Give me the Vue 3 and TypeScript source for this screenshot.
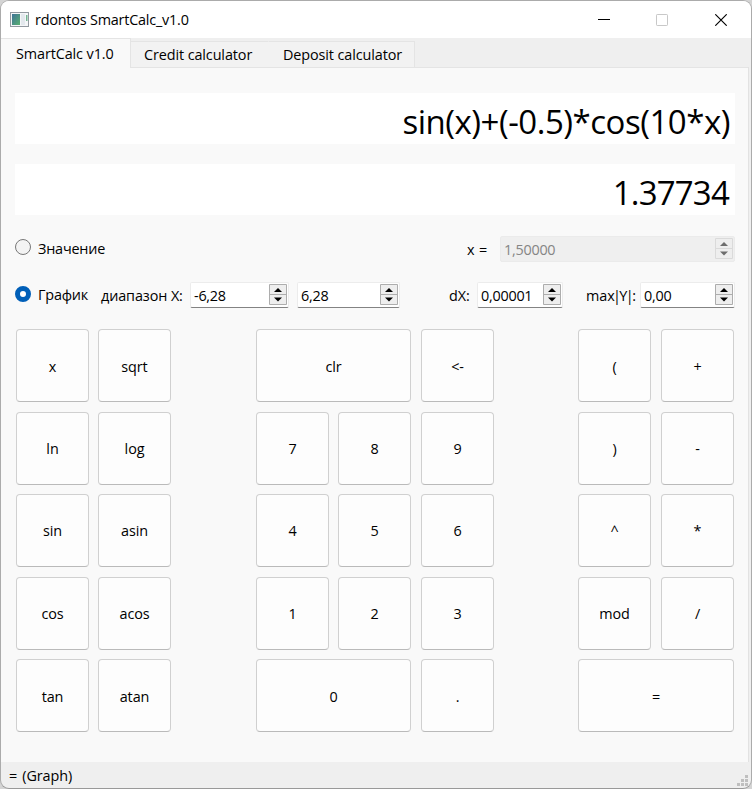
<script setup lang="ts">
import { ref } from 'vue'

interface Key {
  label: string
  row: number
  col: number
  span?: number
}

const tabs = ['SmartCalc v1.0', 'Credit calculator', 'Deposit calculator']
const mode = ref<'value' | 'graph'>('graph')
const expression = ref('sin(x)+(-0.5)*cos(10*x)')
const result = ref('1.37734')

// Grid lines: odd tracks hold keys, even tracks are the gutters between them.
const keys: Key[] = [
  { label: 'x', row: 1, col: 1 }, { label: 'sqrt', row: 1, col: 3 },
  { label: 'clr', row: 1, col: 5, span: 3 }, { label: '<-', row: 1, col: 9 },
  { label: '(', row: 1, col: 11 }, { label: '+', row: 1, col: 13 },
  { label: 'ln', row: 3, col: 1 }, { label: 'log', row: 3, col: 3 },
  { label: '7', row: 3, col: 5 }, { label: '8', row: 3, col: 7 }, { label: '9', row: 3, col: 9 },
  { label: ')', row: 3, col: 11 }, { label: '-', row: 3, col: 13 },
  { label: 'sin', row: 5, col: 1 }, { label: 'asin', row: 5, col: 3 },
  { label: '4', row: 5, col: 5 }, { label: '5', row: 5, col: 7 }, { label: '6', row: 5, col: 9 },
  { label: '^', row: 5, col: 11 }, { label: '*', row: 5, col: 13 },
  { label: 'cos', row: 7, col: 1 }, { label: 'acos', row: 7, col: 3 },
  { label: '1', row: 7, col: 5 }, { label: '2', row: 7, col: 7 }, { label: '3', row: 7, col: 9 },
  { label: 'mod', row: 7, col: 11 }, { label: '/', row: 7, col: 13 },
  { label: 'tan', row: 9, col: 1 }, { label: 'atan', row: 9, col: 3 },
  { label: '0', row: 9, col: 5, span: 3 }, { label: '.', row: 9, col: 9 },
  { label: '=', row: 9, col: 11, span: 3 },
]

const place = (k: Key) => ({ gridRow: `${k.row}`, gridColumn: `${k.col} / span ${k.span ?? 1}` })

function press(label: string) {
  if (label === 'clr') expression.value = ''
  else if (label === '<-') expression.value = expression.value.slice(0, -1)
  else if (label !== '=') expression.value += label
}
</script>

<template>
  <div class="desktop">
    <div class="window">
      <header class="titlebar">
        <svg class="app-icon" width="19" height="15" viewBox="0 0 19 15">
          <defs>
            <linearGradient id="screen" x1="0" y1="0" x2="1" y2="1">
              <stop offset="0" stop-color="#3f7398" />
              <stop offset="1" stop-color="#58b070" />
            </linearGradient>
          </defs>
          <rect x="0.5" y="0.5" width="18" height="14" fill="#f4f6f8" stroke="#9299a0" />
          <rect x="2" y="2" width="8" height="11" fill="url(#screen)" />
          <rect x="11" y="2" width="4" height="11" fill="#e3e8ed" />
          <rect x="16" y="3" width="1.5" height="6" fill="#74b592" />
        </svg>
        <span class="title">rdontos SmartCalc_v1.0</span>
        <div class="controls">
          <svg width="12" height="12" viewBox="0 0 12 12"><path d="M0 5.5H12" stroke="#000" /></svg>
          <svg width="12" height="12" viewBox="0 0 12 12"><rect x="0.5" y="0.5" width="11" height="11" rx="0.7" fill="none" stroke="#c8c8c8" /></svg>
          <svg class="close" width="12" height="12" viewBox="0 0 12 12"><path d="M0.3 0.3L11.7 11.7M11.7 0.3L0.3 11.7" stroke="#000" stroke-width="1.15" /></svg>
        </div>
      </header>

      <nav class="tabs">
        <div v-for="(t, i) in tabs" :key="t" class="tab" :class="['tab-' + i, { active: i === 0 }]">{{ t }}</div>
      </nav>

      <main class="pane">
        <div class="display">{{ expression }}</div>
        <div class="display second">{{ result }}</div>

        <div class="row value-row">
          <span class="radio" :class="{ on: mode === 'value' }" @click="mode = 'value'"></span>
          <span class="caption">Значение</span>
          <span class="x-label">x =</span>
          <div class="spin disabled x-spin">
            <span class="num">1,50000</span>
            <svg class="arrows" width="18" height="21" viewBox="0 0 18 21"><path d="M0.5 0.5H17.5V20.5H0.5ZM0.5 10.5H17.5" /><path class="tri" d="M5 8L9 4L13 8ZM5 13.5H13L9 17.5Z" /></svg>
          </div>
        </div>

        <div class="row graph-row">
          <span class="radio" :class="{ on: mode === 'graph' }" @click="mode = 'graph'"></span>
          <span class="caption graph">График</span>
          <span class="range-label">диапазон X:</span>
          <div class="spin from-spin">
            <span class="num">-6,28</span>
            <svg class="arrows" width="18" height="21" viewBox="0 0 18 21"><path d="M0.5 0.5H17.5V20.5H0.5ZM0.5 10.5H17.5" /><path class="tri" d="M5 8L9 4L13 8ZM5 13.5H13L9 17.5Z" /></svg>
          </div>
          <div class="spin to-spin">
            <span class="num">6,28</span>
            <svg class="arrows" width="18" height="21" viewBox="0 0 18 21"><path d="M0.5 0.5H17.5V20.5H0.5ZM0.5 10.5H17.5" /><path class="tri" d="M5 8L9 4L13 8ZM5 13.5H13L9 17.5Z" /></svg>
          </div>
          <span class="dx-label">dX:</span>
          <div class="spin dx-spin">
            <span class="num">0,00001</span>
            <svg class="arrows" width="18" height="21" viewBox="0 0 18 21"><path d="M0.5 0.5H17.5V20.5H0.5ZM0.5 10.5H17.5" /><path class="tri" d="M5 8L9 4L13 8ZM5 13.5H13L9 17.5Z" /></svg>
          </div>
          <span class="max-label">ma<span class="abs">x|Y|</span>:</span>
          <div class="spin max-spin">
            <span class="num">0,00</span>
            <svg class="arrows" width="18" height="21" viewBox="0 0 18 21"><path d="M0.5 0.5H17.5V20.5H0.5ZM0.5 10.5H17.5" /><path class="tri" d="M5 8L9 4L13 8ZM5 13.5H13L9 17.5Z" /></svg>
          </div>
        </div>

        <div class="keypad">
          <button v-for="k in keys" :key="k.label" class="key" :class="{ inner: k.row > 1 && k.row < 9 }" :style="place(k)" @click="press(k.label)">{{ k.label }}</button>
        </div>
      </main>

      <footer class="status">
        <span class="message">= (Graph)</span>
        <svg class="grip" width="11" height="11" viewBox="0 0 11 11">
          <path fill="#bfbfbf" d="M8 0h3v3h-3zM4 4h3v3h-3zM8 4h3v3h-3zM0 8h3v3h-3zM4 8h3v3h-3zM8 8h3v3h-3z" />
        </svg>
      </footer>
    </div>
  </div>
</template>

<style>
body {
  margin: 0;
  background: #fff;
}
</style>

<style scoped>
.desktop {
  width: 752px;
  height: 789px;
  background: #d4d4d4;
  font-family: 'Open Sans', 'Noto Sans', sans-serif;
  font-size: 14.4px;
  letter-spacing: -0.1px;
  color: #000;
}
.window {
  box-sizing: border-box;
  width: 752px;
  height: 789px;
  border: 1px solid #ababab;
  border-bottom-color: #999;
  border-radius: 9px;
  overflow: hidden;
  background: #efefef;
  display: flex;
  flex-direction: column;
}
.titlebar {
  height: 37px;
  flex: none;
  background: #fff;
  display: flex;
  align-items: center;
  padding: 0 24px 0 9px;
}
.title {
  margin-left: 6px;
  letter-spacing: -0.2px;
}
.controls {
  margin-left: auto;
  display: flex;
  gap: 46px;
}
.controls svg {
  display: block;
}
.controls .close {
  margin-left: 1px;
}
.tabs {
  height: 30px;
  flex: none;
  display: flex;
  align-items: flex-end;
}
.tab {
  box-sizing: border-box;
  height: 27px;
  line-height: 25px;
  background: #f2f2f2;
  border: 1px solid #e4e4e4;
  border-left: 0;
  white-space: nowrap;
}
.tab-1 {
  width: 138px;
  padding-left: 13px;
  border-right-color: #f2f2f2;
}
.tab-2 {
  width: 146px;
  padding-left: 14px;
}
.tab.active {
  width: 130px;
  height: 30px;
  line-height: 30px;
  padding-left: 15px;
  background: #f9f9f9;
  border-bottom: 0;
}
.pane {
  box-sizing: border-box;
  width: 748px;
  height: 695px;
  flex: none;
  margin-top: -1px;
  padding: 26px 13px 0 14px;
  border-right: 1px solid #e2e2e2;
  background: linear-gradient(#e4e4e4, #e4e4e4) 129px 0 / 618px 1px no-repeat #f9f9f9;
}
.display {
  height: 51px;
  line-height: 57px;
  background: #fff;
  text-align: right;
  padding-right: 5px;
  font-size: 33px;
  letter-spacing: -0.48px;
}
.second {
  margin-top: 20px;
  padding-right: 6px;
  letter-spacing: -0.8px;
}
.row {
  display: flex;
  height: 26px;
  line-height: 26px;
  white-space: nowrap;
}
.value-row {
  margin-top: 21px;
}
.graph-row {
  margin-top: 20px;
}
.radio {
  box-sizing: border-box;
  flex: none;
  width: 16px;
  height: 16px;
  margin-top: 3px;
  border: 1px solid #777;
  border-radius: 50%;
  background: #f3f3f3;
}
.graph-row .radio {
  margin-top: 4px;
}
.radio.on {
  border: 5px solid #005fb8;
  background: #fff;
}
.caption {
  width: 55px;
  margin-left: 7px;
  letter-spacing: -0.2px;
}
.caption.graph {
  width: 63px;
}
.x-label {
  width: 33px;
  margin-left: 374px;
  padding-top: 1px;
  word-spacing: 1px;
}
.range-label {
  width: 89px;
  padding-top: 1px;
}
.dx-label {
  width: 28px;
  margin-left: 49px;
  padding-top: 1px;
}
.max-label {
  width: 54px;
  margin-left: 23px;
  padding-top: 1px;
}
.abs {
  letter-spacing: -1.6px;
}
.spin {
  box-sizing: border-box;
  flex: none;
  height: 26px;
  border: 1px solid #ececec;
  border-bottom-color: #838383;
  border-radius: 2px;
  background: #fff;
  display: flex;
  justify-content: space-between;
  padding: 1px 1px 0 3px;
}
.num {
  line-height: 24px;
  letter-spacing: -0.25px;
}
.arrows {
  fill: #eee;
  stroke: #adadad;
}
.arrows .tri {
  fill: #000;
  stroke: none;
}
.x-spin {
  width: 235px;
}
.from-spin {
  width: 99px;
}
.to-spin {
  width: 103px;
  margin-left: 8px;
}
.dx-spin {
  width: 86px;
}
.max-spin {
  width: 95px;
}
.disabled {
  background: #efefef;
  border-color: #ebebeb;
  color: #858585;
}
.disabled .arrows {
  stroke: #dadada;
}
.disabled .tri {
  fill: #6d6d6d;
}
.keypad {
  display: grid;
  grid-template-columns: 73px 9px 73px 85px 73px 9px 73px 10px 73px 84px 73px 10px 73px;
  grid-template-rows: 73px 10px 73px 9px 73px 10px 73px 9px 73px;
  margin: 21px 0 0 1px;
}
.key {
  appearance: none;
  margin: 0;
  padding: 2px 0 0;
  font: inherit;
  letter-spacing: inherit;
  color: #000;
  background: #fdfdfd;
  border: 1px solid #d0d0d0;
  border-bottom-color: #bababa;
  border-radius: 4px;
}
.key.inner {
  padding-top: 0;
}
.status {
  flex: 1;
  display: flex;
  justify-content: space-between;
  padding: 0 3px 0 8px;
  line-height: 27px;
}
.message {
  word-spacing: 1.5px;
}
.grip {
  margin-top: 13px;
}
</style>
